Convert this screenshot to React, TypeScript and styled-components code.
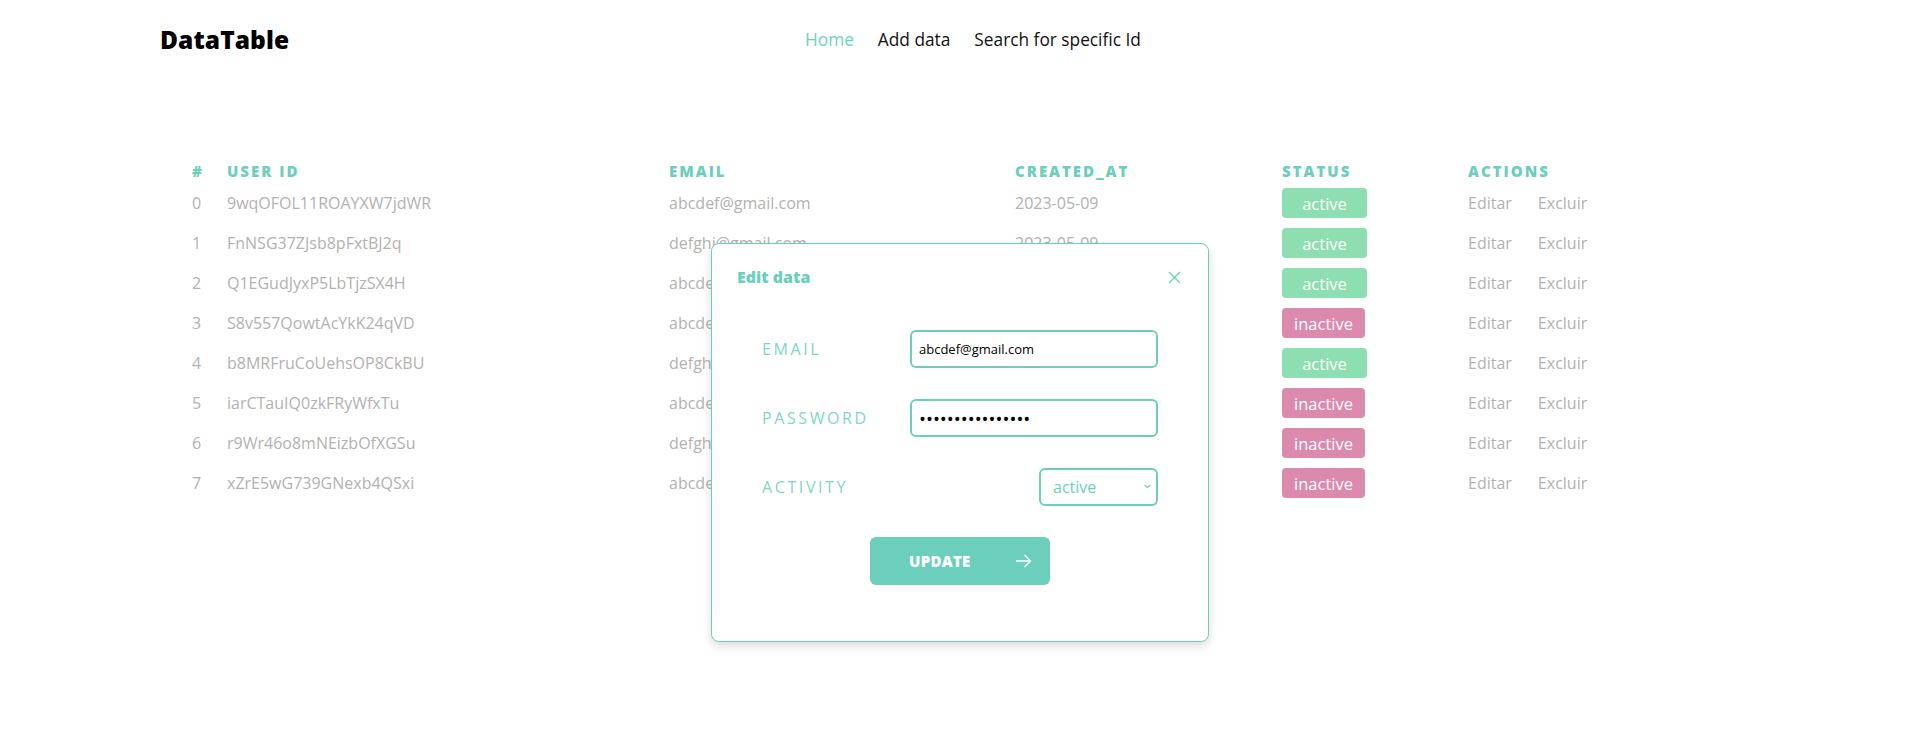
import React from "react";
import styled, { createGlobalStyle } from "styled-components";

const GlobalStyle = createGlobalStyle`
  html, body { margin: 0; padding: 0; background: #ffffff; }
  body { font-family: "Open Sans", "Liberation Sans", sans-serif; }
  * { box-sizing: border-box; }
`;

const TEAL = "#6ccfbb";
const GRAY = "#b3b1b1";

const Page = styled.div`
  position: relative;
  width: 1918px;
  height: 742px;
  overflow: hidden;
`;

const Header = styled.header`
  display: grid;
  grid-template-columns: 645px auto;
  align-items: center;
  height: 78px;
  padding-left: 160px;
`;

const Logo = styled.div`
  font-size: 24.5px;
  font-weight: 800;
  color: #000;
  letter-spacing: 0.1px;
`;

const Nav = styled.nav`
  display: flex;
  gap: 24px;
`;

const NavLink = styled.a<{ $active?: boolean }>`
  font-size: 17.3px;
  color: ${(p) => (p.$active ? "#6fd3c1" : "#111")};
  text-decoration: none;
  cursor: pointer;
`;

const Table = styled.div`
  margin-top: 81px;
  margin-left: 192px;
  display: grid;
  grid-template-columns: 35px 442px 346px 267px 186px auto;
`;

const HeadCell = styled.div`
  height: 24px;
  display: flex;
  align-items: center;
  font-size: 15px;
  font-weight: 800;
  letter-spacing: 2px;
  color: ${TEAL};
`;

const Cell = styled.div`
  height: 40px;
  display: flex;
  align-items: center;
  font-size: 16px;
  color: ${GRAY};
`;

const Badge = styled.span<{ $active: boolean }>`
  display: inline-flex;
  align-items: center;
  justify-content: center;
  width: ${(p) => (p.$active ? "85px" : "83px")};
  height: 30px;
  border-radius: 4px;
  background: ${(p) => (p.$active ? "#8ddfb1" : "#db8aae")};
  color: #fff;
  font-size: 16.5px;
`;

const Actions = styled.div`
  display: flex;
  gap: 26px;
`;

const ActionLink = styled.span`
  color: ${GRAY};
  font-size: 16px;
  cursor: pointer;
`;

const Modal = styled.div`
  position: absolute;
  left: 711px;
  top: 243px;
  width: 498px;
  height: 399px;
  background: #fff;
  border: 1px solid ${TEAL};
  border-radius: 8px;
  box-shadow: 0 4px 10px rgba(0, 0, 0, 0.14);
  padding: 19px 25px;
`;

const ModalHeader = styled.div`
  display: flex;
  align-items: center;
  justify-content: space-between;
  height: 28px;
`;

const ModalTitle = styled.h2`
  margin: 0;
  font-size: 16px;
  font-weight: 800;
  color: ${TEAL};
`;

const CloseButton = styled.button`
  border: 0;
  background: none;
  padding: 0;
  margin-right: 2px;
  display: flex;
  cursor: pointer;
`;

const Form = styled.div`
  margin-top: 39px;
  padding: 0 25px;
  display: flex;
  flex-direction: column;
  gap: 31px;
`;

const FormRow = styled.div`
  display: flex;
  align-items: center;
  justify-content: space-between;
  height: 38px;
`;

const Label = styled.label`
  font-size: 16px;
  font-weight: 400;
  letter-spacing: 2.6px;
  color: #7fd6c6;
`;

const TextInput = styled.input<{ $secret?: boolean }>`
  width: 248px;
  height: 38px;
  border: 2px solid ${TEAL};
  border-radius: 6px;
  padding: 0 7px;
  font-family: "Open Sans", "Liberation Sans", sans-serif;
  font-size: ${(p) => (p.$secret ? "18.5px" : "13px")};
  color: #000;
  outline: none;
`;

const SelectWrap = styled.div`
  position: relative;
  width: 119px;
  height: 38px;
`;

const Select = styled.select`
  appearance: none;
  width: 100%;
  height: 100%;
  border: 2px solid ${TEAL};
  border-radius: 6px;
  background: #fff;
  padding: 0 0 0 12px;
  font-family: "Open Sans", "Liberation Sans", sans-serif;
  font-size: 16px;
  color: ${TEAL};
  outline: none;
`;

const Chevron = styled.svg`
  position: absolute;
  right: 7px;
  top: 16px;
  pointer-events: none;
`;

const UpdateButton = styled.button`
  align-self: center;
  width: 180px;
  height: 48px;
  border: 0;
  border-radius: 6px;
  background: ${TEAL};
  color: #fff;
  font-family: "Open Sans", "Liberation Sans", sans-serif;
  font-size: 15px;
  font-weight: 800;
  letter-spacing: 0.3px;
  display: flex;
  align-items: center;
  justify-content: space-between;
  padding: 0 18px 0 39px;
  cursor: pointer;
`;

type Row = { id: string; email: string; status: "active" | "inactive" };

const rows: Row[] = [
  { id: "9wqOFOL11ROAYXW7jdWR", email: "abcdef@gmail.com", status: "active" },
  { id: "FnNSG37ZJsb8pFxtBJ2q", email: "defghi@gmail.com", status: "active" },
  { id: "Q1EGudJyxP5LbTjzSX4H", email: "abcdef@gmail.com", status: "active" },
  { id: "S8v557QowtAcYkK24qVD", email: "abcdef@gmail.com", status: "inactive" },
  { id: "b8MRFruCoUehsOP8CkBU", email: "defghi@gmail.com", status: "active" },
  { id: "iarCTauIQ0zkFRyWfxTu", email: "abcdef@gmail.com", status: "inactive" },
  { id: "r9Wr46o8mNEizbOfXGSu", email: "defghi@gmail.com", status: "inactive" },
  { id: "xZrE5wG739GNexb4QSxi", email: "abcdef@gmail.com", status: "inactive" },
];

export default function App() {
  return (
    <Page>
      <GlobalStyle />
      <Header>
        <Logo>DataTable</Logo>
        <Nav>
          <NavLink $active>Home</NavLink>
          <NavLink>Add data</NavLink>
          <NavLink>Search for specific Id</NavLink>
        </Nav>
      </Header>

      <Table>
        <HeadCell>#</HeadCell>
        <HeadCell>USER ID</HeadCell>
        <HeadCell>EMAIL</HeadCell>
        <HeadCell>CREATED_AT</HeadCell>
        <HeadCell>STATUS</HeadCell>
        <HeadCell>ACTIONS</HeadCell>
        {rows.map((r, i) => (
          <React.Fragment key={r.id}>
            <Cell>{i}</Cell>
            <Cell>{r.id}</Cell>
            <Cell>{r.email}</Cell>
            <Cell>2023-05-09</Cell>
            <Cell>
              <Badge $active={r.status === "active"}>{r.status}</Badge>
            </Cell>
            <Cell>
              <Actions>
                <ActionLink>Editar</ActionLink>
                <ActionLink>Excluir</ActionLink>
              </Actions>
            </Cell>
          </React.Fragment>
        ))}
      </Table>

      <Modal>
        <ModalHeader>
          <ModalTitle>Edit data</ModalTitle>
          <CloseButton aria-label="close">
            <svg width="13" height="13" viewBox="0 0 13 13">
              <path d="M1 1L12 12M12 1L1 12" stroke={TEAL} strokeWidth="1.3" fill="none" />
            </svg>
          </CloseButton>
        </ModalHeader>
        <Form>
          <FormRow>
            <Label>EMAIL</Label>
            <TextInput type="text" readOnly value="abcdef@gmail.com" />
          </FormRow>
          <FormRow>
            <Label>PASSWORD</Label>
            <TextInput $secret type="password" readOnly value="abcdefghijklmnop" />
          </FormRow>
          <FormRow>
            <Label>ACTIVITY</Label>
            <SelectWrap>
              <Select defaultValue="active">
                <option value="active">active</option>
                <option value="inactive">inactive</option>
              </Select>
              <Chevron width="7" height="5" viewBox="0 0 7 5">
                <path d="M0.6 0.8L3.5 3.7L6.4 0.8" stroke={TEAL} strokeWidth="1.2" fill="none" />
              </Chevron>
            </SelectWrap>
          </FormRow>
          <UpdateButton>
            <span>UPDATE</span>
            <svg width="17" height="14" viewBox="0 0 17 14">
              <path d="M1 7H15.5M9.5 1L15.5 7L9.5 13" stroke="#fff" strokeWidth="1.3" fill="none" />
            </svg>
          </UpdateButton>
        </Form>
      </Modal>
    </Page>
  );
}
